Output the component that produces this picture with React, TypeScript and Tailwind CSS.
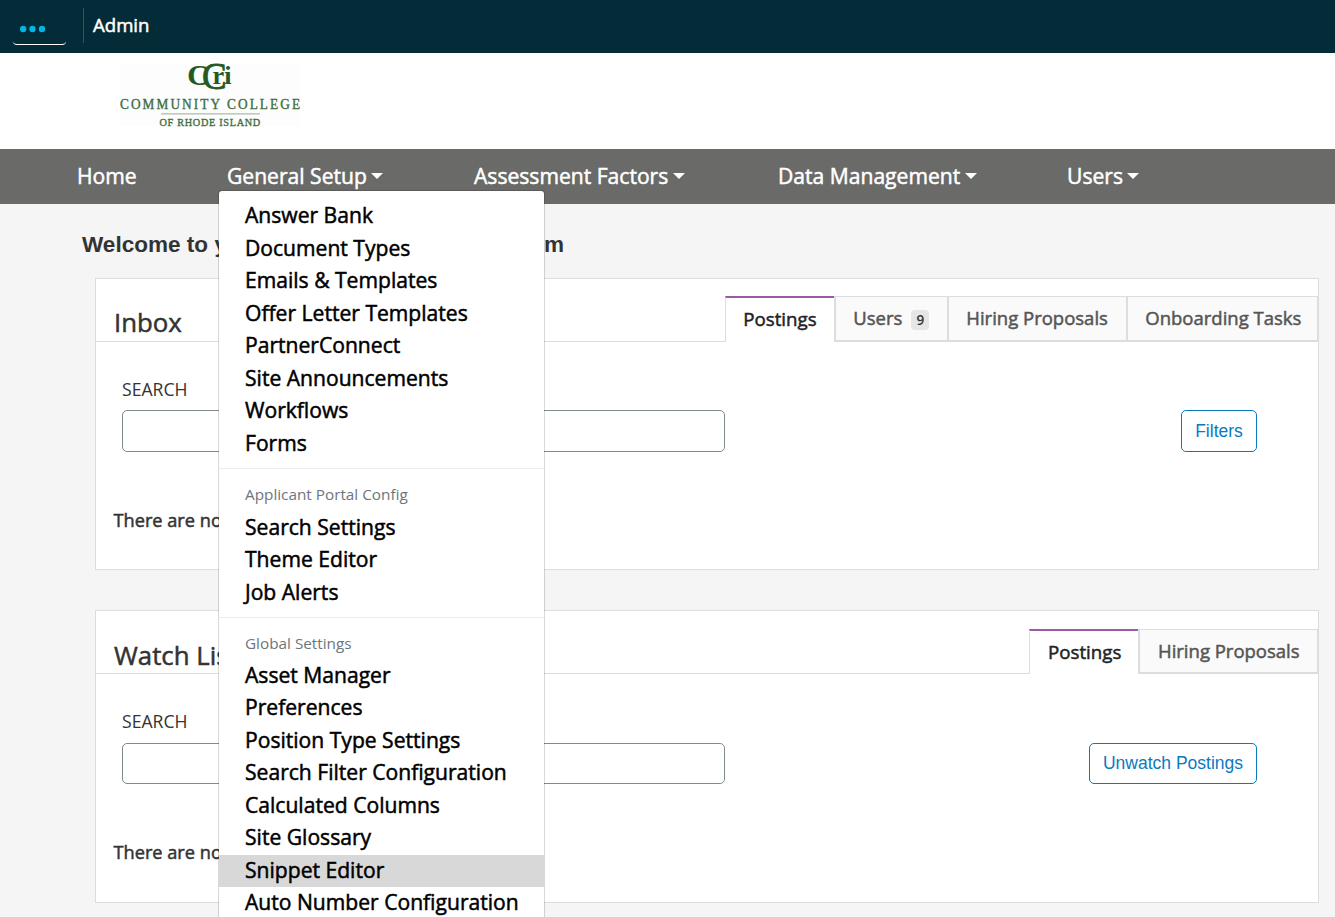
import type { ReactNode } from "react";

const sans = "font-['Open_Sans','Noto_Sans',sans-serif]";

const menuGroups: { title?: string; titleHeight?: string; items: string[] }[] = [
  {
    items: [
      "Answer Bank",
      "Document Types",
      "Emails & Templates",
      "Offer Letter Templates",
      "PartnerConnect",
      "Site Announcements",
      "Workflows",
      "Forms",
    ],
  },
  { title: "Applicant Portal Config", titleHeight: "h-[34.9px]", items: ["Search Settings", "Theme Editor", "Job Alerts"] },
  {
    title: "Global Settings",
    titleHeight: "h-[33.5px]",
    items: [
      "Asset Manager",
      "Preferences",
      "Position Type Settings",
      "Search Filter Configuration",
      "Calculated Columns",
      "Site Glossary",
      "Snippet Editor",
      "Auto Number Configuration",
    ],
  },
];

function Logo() {
  return (
    <svg className="ml-[120px] mt-[10px] block h-[63px] w-[180px] overflow-visible bg-[#fdfdfd]" viewBox="0 0 180 63" fontFamily="'Liberation Serif', serif">
      <g fill="#245a22" stroke="#245a22">
        <text transform="translate(67.3 22.3) scale(1.02 1)" fontSize="29.5" fontWeight="700" strokeWidth="0.2">C</text>
        <text transform="translate(82 25.6) scale(1 1)" fontSize="37" strokeWidth="0.8">C</text>
        <text transform="translate(92.5 20.6) scale(1.05 1)" fontSize="25" fontWeight="700" strokeWidth="0">ri</text>
      </g>
      <text x="0" y="46.4" fontSize="14" fill="#3f6e3d" stroke="#3f6e3d" strokeWidth="0.35" transform="scale(0.95 1)" textLength="189.5">COMMUNITY COLLEGE</text>
      <path d="M41 50.9h99" stroke="#a9bda8" strokeWidth="1.2" />
      <text x="41.6" y="62.6" fontSize="10.8" fill="#3f6e3d" stroke="#3f6e3d" strokeWidth="0.35" transform="scale(0.95 1)" textLength="106">OF RHODE ISLAND</text>
    </svg>
  );
}

function SetupMenu() {
  return (
    <div className="absolute left-[-9px] top-[41px] z-10 w-[327px] rounded-[4px] border border-black/15 bg-white bg-clip-padding pt-[9px] text-black">
      {menuGroups.map((g, i) => (
        <div key={i} className={i > 0 ? "mt-2 border-t border-[#e9ecef] pt-2" : ""}>
          {g.title && (
            <div className={`pl-[26px] pt-1 text-[15.3px] leading-[27px] text-[#6c757d] [-webkit-text-stroke:0] ${g.titleHeight}`}>{g.title}</div>
          )}
          {g.items.map((t) => (
            <div key={t} className={`h-[32.5px] whitespace-nowrap pl-[26px] text-[21.1px] leading-[30px] ${t === "Snippet Editor" ? "bg-[#d8d8d8]" : ""}`}>
              {t}
            </div>
          ))}
        </div>
      ))}
    </div>
  );
}

function NavItem({ label, width, caret = true, children }: { label: string; width: string; caret?: boolean; children?: ReactNode }) {
  return (
    <div className={`relative flex h-[55px] items-center whitespace-nowrap pb-[2px] ${width}`}>
      <span>{label}</span>
      {caret && <span className="ml-[4.5px] border-x-[6px] border-t-[6px] border-x-transparent border-t-white" />}
      {children}
    </div>
  );
}

type Tab = { label: string; width: string; badge?: string };

type PanelProps = {
  title: string;
  titleLeading: string;
  tabs: Tab[];
  tabsTop: string;
  tabPad: string;
  fieldTop: string;
  fieldHeight: string;
  action: string;
  actionSize: string;
  frame: string;
};

function Panel({ title, titleLeading, tabs, tabsTop, tabPad, fieldTop, fieldHeight, action, actionSize, frame }: PanelProps) {
  return (
    <section className={`ml-[95px] w-[1224px] border border-[#dadde1] bg-white ${frame}`}>
      <header className="flex h-[63px] items-stretch">
        <div className={`flex-1 border-b border-[#dadde1] pl-[18px] pt-[26px] text-[25.8px] text-[#333] [-webkit-text-stroke:0.5px] ${titleLeading}`}>{title}</div>
        <div className={`flex [-webkit-text-stroke:0.5px] ${tabsTop}`}>
          {tabs.map((t, i) =>
            i === 0 ? (
              <div key={t.label} className={`border-l border-t-2 border-l-[#dadde1] border-t-[#9b59a8] text-[18.7px] leading-[42px] text-[#222] ${tabPad} ${t.width}`}>
                {t.label}
              </div>
            ) : (
              <div key={t.label} className={`flex whitespace-nowrap border-b-2 border-l-2 border-t border-[#dadde1] bg-[#fafafa] text-[18.5px] leading-[42px] text-[#555] last:border-r ${tabPad} ${t.width}`}>
                {t.label}
                {t.badge && (
                  <span className="ml-[9px] mt-[13px] h-5 w-[18px] rounded-[4px] bg-[#e6e6e6] text-center text-[13.5px] leading-5 font-semibold text-[#333] [-webkit-text-stroke:0]">{t.badge}</span>
                )}
              </div>
            )
          )}
        </div>
      </header>
      <div className="pl-[26px] pr-[61px] pt-[32px]">
        <div className="text-[17.6px] leading-[30px] text-[#333]">SEARCH</div>
        <div className={`flex justify-between ${fieldTop}`}>
          <div className={`w-[603px] rounded-[5px] border border-[#7f8b8d] bg-white ${fieldHeight}`} />
          <div className={`rounded-[5px] border border-[#0a7abf] text-center font-['Liberation_Sans',Arial,sans-serif] text-[17.5px] text-[#0a7abf] ${fieldHeight} ${actionSize}`}>
            {action}
          </div>
        </div>
      </div>
      <p className="pl-[17.5px] pt-[53px] text-[18.2px] leading-[30px] text-[#333] [-webkit-text-stroke:0.5px]">There are no items to display.</p>
    </section>
  );
}

export default function App() {
  return (
    <div className={`h-[917px] w-[1335px] overflow-hidden bg-[#f5f5f5] ${sans}`}>
      <div className="flex h-[53px] bg-[#042b38] text-white">
        <div className="ml-[13px] mt-2 flex h-[37px] w-[53px] items-center rounded-[4px] border-b border-white pl-[7px] pt-[5px]">
          <svg className="h-[8px] w-[28px]" viewBox="0 0 28 8" fill="#00b5e2">
            <circle cx="3.2" cy="4" r="3.2" />
            <circle cx="12.5" cy="4" r="3.2" />
            <circle cx="22" cy="4" r="3.2" />
          </svg>
        </div>
        <div className="ml-[17px] mt-2 h-[35px] border-l border-[#35545e] pl-[9px] text-[18.6px] leading-[34px] [-webkit-text-stroke:0.5px]">Admin</div>
      </div>
      <div className="flex h-[96px] items-start bg-white">
        <Logo />
      </div>
      <nav className="flex h-[55px] bg-[#6a6a68] pl-[77px] text-[21.1px] text-white [-webkit-text-stroke:0.5px]">
        <NavItem label="Home" width="w-[150px]" caret={false} />
        <NavItem label="General Setup" width="w-[247px]">
          <SetupMenu />
        </NavItem>
        <NavItem label="Assessment Factors" width="w-[304px]" />
        <NavItem label="Data Management" width="w-[289px]" />
        <NavItem label="Users" width="w-[100px]" />
      </nav>
      <h1 className="h-[74px] pl-[82px] pt-[24px] font-['Liberation_Sans',Arial,sans-serif] text-[22.55px] leading-[33px] font-bold text-[#333]">
        Welcome to your Online Recruitment System
      </h1>
      <Panel
        title="Inbox"
        titleLeading="leading-[34px]"
        tabs={[
          { label: "Postings", width: "w-[109px]" },
          { label: "Users", width: "w-[113px]", badge: "9" },
          { label: "Hiring Proposals", width: "w-[179px]" },
          { label: "Onboarding Tasks", width: "w-[192px]" },
        ]}
        tabsTop="pt-[17px]"
        tabPad="pl-[17.3px]"
        fieldTop="mt-[6px]"
        fieldHeight="h-[42px]"
        action="Filters"
        actionSize="w-[76px] leading-[40px]"
        frame="h-[292px]"
      />
      <Panel
        title="Watch List"
        titleLeading="leading-[36px]"
        tabs={[
          { label: "Postings", width: "w-[109px]" },
          { label: "Hiring Proposals", width: "w-[180px]" },
        ]}
        tabsTop="pt-[18px]"
        tabPad="pl-[18px]"
        fieldTop="mt-[7px]"
        fieldHeight="h-[41px]"
        action="Unwatch Postings"
        actionSize="w-[168px] leading-[39px]"
        frame="mt-[40px] h-[293px]"
      />
    </div>
  );
}
